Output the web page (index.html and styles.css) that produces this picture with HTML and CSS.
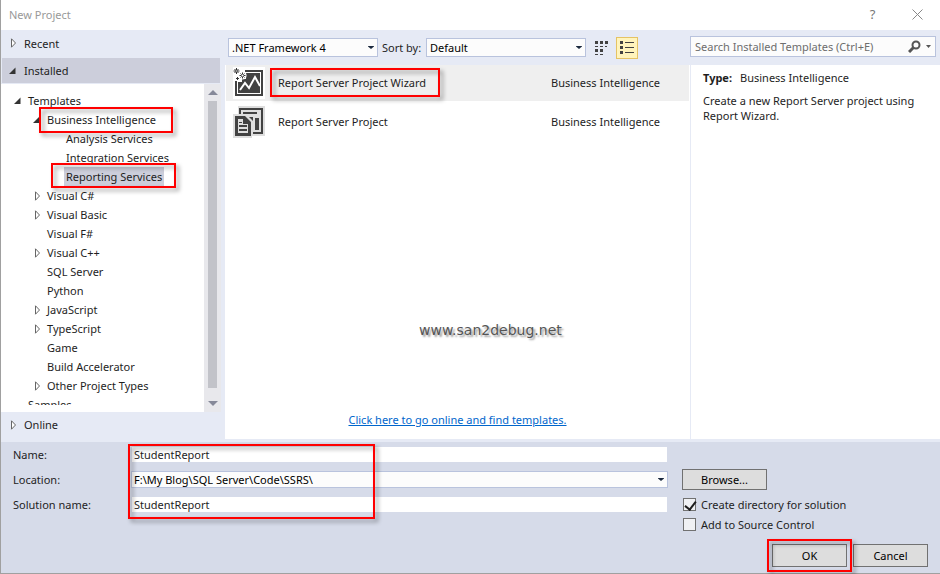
FILE: index.html
```html
<!DOCTYPE html>
<html lang="en">
<head>
<meta charset="utf-8">
<title>New Project</title>
<link rel="stylesheet" href="styles.css">
</head>
<body>
<svg class="defs" aria-hidden="true">
  <symbol id="closed" viewBox="0 0 10 10"><path d="M3.5 .8v8.400L7.500 5z" fill="#fff" stroke="#666"/></symbol>
  <symbol id="open" viewBox="0 0 10 10"><path d="M7.500 1.500v6.500h-6.500z" fill="#333"/></symbol>
  <symbol id="drop" viewBox="0 0 6 3"><path d="M0 0h6v.500L3 3 0 .500z" fill="#1b293e"/></symbol>
</svg>
<div class="window">
  <header class="titlebar">
    <h1>New Project</h1>
    <button class="caption" aria-label="Help">?</button>
    <button class="caption" aria-label="Close"><svg width="11" height="11"><path d="M.5.5l10 10M10.5.5l-10 10" stroke="#888" fill="none"/></svg></button>
  </header>

  <main class="content">
    <nav class="sidebar">
      <button class="section edge"><svg class="arrow"><use href="#closed"/></svg>Recent</button>
      <button class="section selected"><svg class="arrow"><use href="#open"/></svg>Installed</button>
      <div class="tree-area">
        <ul class="tree">
          <li><svg class="arrow"><use href="#open"/></svg>Templates</li>
          <li class="l1"><svg class="arrow"><use href="#open"/></svg><span class="item">Business Intelligence<i class="mark mark-bi"></i></span></li>
          <li class="l2">Analysis Services</li>
          <li class="l2">Integration Services</li>
          <li class="l2"><span class="item current">Reporting Services<i class="mark mark-rs"></i></span></li>
          <li class="l1"><svg class="arrow"><use href="#closed"/></svg>Visual C#</li>
          <li class="l1"><svg class="arrow"><use href="#closed"/></svg>Visual Basic</li>
          <li class="l1 leaf">Visual F#</li>
          <li class="l1"><svg class="arrow"><use href="#closed"/></svg>Visual C++</li>
          <li class="l1 leaf">SQL Server</li>
          <li class="l1 leaf">Python</li>
          <li class="l1"><svg class="arrow"><use href="#closed"/></svg>JavaScript</li>
          <li class="l1"><svg class="arrow"><use href="#closed"/></svg>TypeScript</li>
          <li class="l1 leaf">Game</li>
          <li class="l1 leaf">Build Accelerator</li>
          <li class="l1"><svg class="arrow"><use href="#closed"/></svg>Other Project Types</li>
          <li class="leaf">Samples</li>
        </ul>
        <div class="scrollbar">
          <svg width="10" height="5"><path d="M0 5l5-5 5 5z" fill="#868999"/></svg>
          <div class="thumb"></div>
          <svg width="10" height="5"><path d="M0 0l5 5 5-5z" fill="#868999"/></svg>
        </div>
      </div>
      <button class="section last"><svg class="arrow"><use href="#closed"/></svg>Online</button>
    </nav>

    <section class="center">
      <div class="toolbar">
        <div class="combo framework">
          <select aria-label="Framework"><option>.NET Framework 4</option></select>
          <svg class="drop"><use href="#drop"/></svg>
        </div>
        <label for="sort">Sort by:</label>
        <div class="combo sort">
          <select id="sort"><option>Default</option></select>
          <svg class="drop"><use href="#drop"/></svg>
        </div>
        <button class="view" aria-label="Small icons">
          <svg width="14" height="14" fill="#424242"><path d="M1 0h3v3H1zM6 0h3v3H6zM11 0h3v3h-3zM1 8h3v3H1zM6 8h3v3H6zM1 5h3v1H1zM6 5h3v1H6zM11 5h2v1h-2zM1 13h3v1H1zM6 13h3v1H6z"/></svg>
        </button>
        <button class="view active" aria-label="Medium icons">
          <svg width="14" height="14" fill="#424242"><path d="M0 0h3v3H0zM0 5h3v3H0zM0 10h3v3H0zM5 1h9v1H5zM5 6h9v1H5zM5 11h9v1H5z"/></svg>
        </button>
      </div>
      <div class="panel">
        <ul class="templates">
          <li class="chosen">
            <svg class="icon" viewBox="0 0 32 32">
              <path fill="#fff" d="M0 0h32v32H0z"/>
              <path fill="#424242" fill-rule="evenodd" d="M12 3h18v26H2V14h2v13h24V5H12z"/>
              <path fill="#424242" d="M13 6h14v20H5V15h4v-3h4z"/>
              <path d="M7 23l5-7 4 5 6-11 5 9" fill="none" stroke="#fff" stroke-width="2"/>
              <circle cx="9.500" cy="8.500" r="4" fill="#fff"/>
              <path d="M3.500 1v6M.5 4h6M1.500 2l4 4M5.500 2l-4 4M9.500 5.500v6M6.500 8.500h6M7.500 6.500l4 4M11.500 6.500l-4 4M4.500 10v3M3 11.500h3" stroke="#333" fill="none"/>
              <path fill="#fff" d="M3 3.500h1v1H3zM8.500 7.500h2v2h-2z"/>
            </svg>
            <span class="name">Report Server Project Wizard<i class="mark mark-wizard"></i></span>
            <span>Business Intelligence</span>
          </li>
          <li>
            <svg class="icon" viewBox="0 0 32 32">
              <path fill="#dedede" d="M5 0h27v30H19v2H0V8h5z"/>
              <path fill="#424242" fill-rule="evenodd" d="M6 2h24v26H20v-2h8V4H8v4H6z"/>
              <path fill="#424242" d="M10 6h14v2H10zM22 12h4v12h-4zM16 11h4v4z"/>
              <path fill="#424242" fill-rule="evenodd" d="M2 10h10l6 6v14H2zM5 13v14h10v-9h-5v-5z"/>
              <path fill="#424242" d="M6 16h3v1H6zM6 19h8v2H6zM6 23h8v2H6z"/>
            </svg>
            <span class="name">Report Server Project</span>
            <span>Business Intelligence</span>
          </li>
        </ul>
        <div class="watermark">www.san2debug.net</div>
        <a class="online" href="#">Click here to go online and find templates.</a>
      </div>
    </section>

    <aside class="details">
      <div class="search">
        <input type="search" aria-label="Search Installed Templates" placeholder="Search Installed Templates (Ctrl+E)">
        <svg width="13" height="13" fill="none" stroke="#555"><circle cx="8" cy="5" r="3.500" stroke-width="2"/><path d="M5.500 7.500L1 12" stroke-width="3"/></svg>
        <svg class="more" width="5" height="3"><path d="M0 0h5L2.500 3z" fill="#555"/></svg>
      </div>
      <div class="info">
        <p class="type"><b>Type:</b>Business Intelligence</p>
        <p>Create a new Report Server project using Report Wizard.</p>
      </div>
    </aside>
  </main>

  <form class="settings">
    <div class="fields">
      <label for="name">Name:</label>
      <input id="name" type="text" value="StudentReport">
      <label for="location">Location:</label>
      <div class="combo location">
        <select id="location"><option>F:\My Blog\SQL Server\Code\SSRS\</option></select>
        <svg class="drop"><use href="#drop"/></svg>
      </div>
      <label for="solution">Solution name:</label>
      <input id="solution" type="text" value="StudentReport">
      <i class="mark mark-fields"></i>
    </div>
    <div class="options">
      <button type="button" class="push browse">Browse...</button>
      <label><input type="checkbox" checked>Create directory for solution</label>
      <label><input type="checkbox">Add to Source Control</label>
      <div class="actions">
        <span class="item"><button type="button" class="push">OK</button><i class="mark mark-ok"></i></span>
        <button type="button" class="push">Cancel</button>
      </div>
    </div>
  </form>
</div>
</body>
</html>
```

FILE: styles.css
```css
* { box-sizing: border-box; }

body {
  margin: 0;
  font: 11px/15px "Noto Sans", "Open Sans", sans-serif;
  color: #1e1e1e;
}

button, input, select { font: inherit; color: inherit; }
button { border: 0; padding: 0; background: none; }
ul { list-style: none; margin: 0; padding: 0; }
svg { flex: none; display: block; }
.defs { position: absolute; width: 0; height: 0; }

.window {
  height: 100vh;
  display: flex;
  flex-direction: column;
  border-left: 1px solid #a0a0a0;
  border-bottom: 1px solid #a0a0a0;
  background: #fff;
  white-space: nowrap;
}

/* Title bar */
.titlebar { display: flex; align-items: center; height: 30px; padding: 0 0 2px 8px; color: #999; }
.titlebar h1 { flex: 1; margin: 0; font-size: 11px; font-weight: 400; }
.caption { width: 45px; height: 28px; display: grid; place-items: center; color: #777; font-size: 13px; }

.content {
  flex: 1;
  min-height: 0;
  display: grid;
  grid-template-columns: 224px 1fr 250px;
  background: #e6eaf5;
  padding-bottom: 3px;
}

/* Sidebar */
.sidebar { display: flex; flex-direction: column; min-height: 0; }
.section { display: flex; align-items: center; height: 28px; padding-left: 7px; text-align: left; }
.section.edge { padding-bottom: 2px; }
.section.last { height: 27px; padding-bottom: 2px; }
.section .arrow { margin-right: 6px; }
.section.selected { height: 25px; margin: 0 5px 1px 1px; padding-left: 6px; background: #cccedb; }
.arrow { width: 10px; height: 10px; }
.tree-area { flex: 1; min-height: 0; display: flex; margin-right: 4px; background: #fff; }
.tree { flex: 1; overflow: hidden; margin: 7px 0; }
.tree li { display: flex; align-items: center; height: 19px; padding-left: 12px; }
.tree .arrow { margin-right: 5px; }
.tree .l1 { padding-left: 31px; }
.tree .l2 { padding-left: 65px; }
.tree .leaf { padding-left: 27px; }
.tree .l1.leaf { padding-left: 46px; }
.item { position: relative; }
.current { line-height: 19px; z-index: 0; }
.current::before { content: ""; position: absolute; inset: 0 -2px; background: #cccedb; z-index: -1; }
.scrollbar {
  width: 17px;
  display: flex;
  flex-direction: column;
  align-items: center;
  gap: 6px;
  padding: 6px 0;
  background: #e8e8ec;
}
.thumb { flex: 1; width: 9px; margin-bottom: 7px; background: #c2c3c9; }

/* Callout frames */
.mark {
  position: absolute;
  z-index: 2;
  border: 2px solid #f00;
  filter: drop-shadow(3px 3px 2px rgba(0, 0, 0, .4));
  pointer-events: none;
}
.mark-bi { inset: -5px auto -6px -8px; width: 134px; }
.mark-rs { inset: -4px auto -2px -15px; width: 125px; }
.mark-wizard { inset: -7px auto -7px -8px; width: 170px; }
.mark-fields { inset: 2px auto -2px 115px; width: 247px; }
.mark-ok { inset: -5px; }

/* Template list */
.center { display: flex; flex-direction: column; min-width: 0; }
.toolbar { display: flex; align-items: center; height: 35px; padding-left: 3px; }
.toolbar label { width: 48px; padding-left: 4px; }
.combo { position: relative; }
.combo select {
  display: block;
  appearance: none;
  width: 100%;
  height: 19px;
  margin: 0;
  padding: 0 3px;
  border: 1px solid #b9c3dd;
  border-radius: 0;
  background: #fcfcfc;
  color: #000;
}
.combo .drop { position: absolute; right: 4px; top: 8px; width: 6px; height: 3px; }
.framework { width: 150px; }
.sort { width: 160px; }
.view { display: grid; place-items: center; width: 22px; height: 22px; margin-left: 4px; }
.view.active { border: 1px solid #e5c365; background: #fff4bc; }
.panel { position: relative; flex: 1; display: flex; flex-direction: column; justify-content: space-between; background: #fff; }
.templates { display: grid; gap: 3px; }
.templates li { display: grid; grid-template-columns: 32px 1fr 138px; align-items: center; height: 36px; margin: 0 1px; padding-left: 7px; }
.templates span { margin-bottom: 2px; }
.templates .chosen { background: #efefef; }
.icon { width: 32px; height: 32px; }
.name { position: relative; justify-self: start; margin-left: 13px; }
.watermark {
  position: absolute;
  left: 194px;
  top: 256px;
  font: 14px/18px "DejaVu Sans", sans-serif;
  color: #555;
  text-shadow: 2px 2px 2px #999;
}
.online { align-self: center; margin-bottom: 12px; color: #0066cc; }

/* Details */
.details { display: flex; flex-direction: column; }
.search {
  display: flex;
  align-items: center;
  height: 21px;
  margin: 6px 4px 8px 0;
  padding-right: 4px;
  border: 1px solid #b9c3dd;
  background: #fcfcfc;
}
.search input { flex: 1; min-width: 0; padding: 0 4px; border: 0; background: none; appearance: none; }
.search input::placeholder { color: #6d6d6d; opacity: 1; }
.search .more { margin-left: 5px; }
.info { flex: 1; margin-left: 1px; padding: 5px 12px; background: #fff; white-space: normal; }
.info p { margin: 0 0 8px; }
.type b { margin-right: 8px; }

/* Project settings */
.settings { display: flex; gap: 14px; padding: 0 12px 6px; background: #d6dbe9; }
.fields { position: relative; flex: 1; align-self: start; display: grid; grid-template-columns: 118px 1fr; grid-auto-rows: 25px; align-items: center; }
.fields > input { height: 15px; min-width: 0; margin: 0 1px; padding: 0 2px; border: 0; background: #fff; }
.location select { height: 17px; line-height: 15px; padding: 0 2px; }
.location .drop { top: 7px; }
.options { width: 246px; display: flex; flex-direction: column; padding-top: 27px; }
.options label { display: flex; align-items: center; height: 20px; }
.options input {
  appearance: none;
  width: 13px;
  height: 13px;
  margin: 0 5px 0 1px;
  border: 1px solid #717171;
  background: #f0f1f4;
}
.options input:checked::before {
  content: "";
  display: block;
  width: 5px;
  height: 9px;
  margin: 0 0 0 3px;
  border: solid #1e1e1e;
  border-width: 0 2px 2px 0;
  transform: rotate(38deg);
}
.push { width: 75px; height: 23px; border: 1px solid #717171; background: #ddd; color: #000; display: block; }
.browse { width: 85px; height: 21px; margin-bottom: 4px; }
.actions { display: flex; justify-content: flex-end; gap: 6px; margin-top: 10px; }
```
